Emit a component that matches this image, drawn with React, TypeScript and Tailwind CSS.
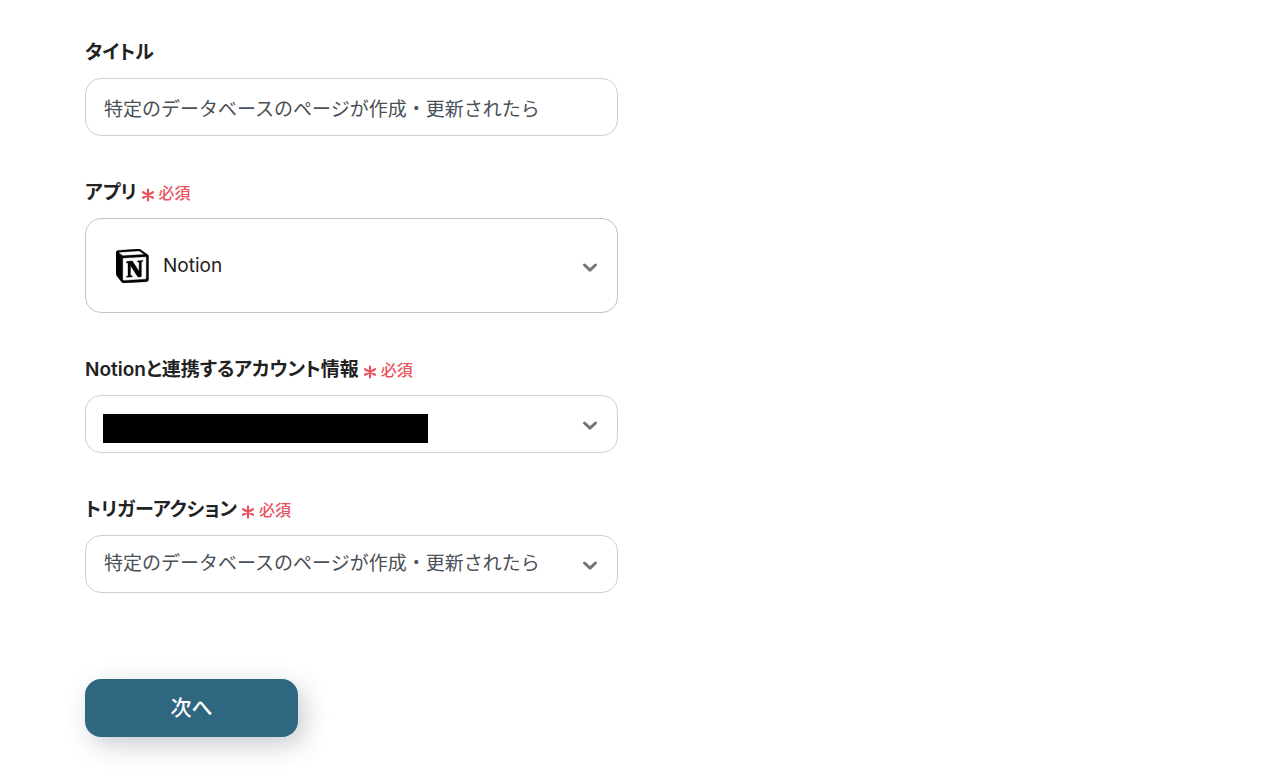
import { useState, type ReactNode } from 'react';
import clsx from 'clsx';

const TRIGGER = '特定のデータベースのページが作成・更新されたら';

function RequiredMark() {
  return (
    <span className="flex items-center gap-1 text-[16px] font-medium text-[#ea535d]">
      <svg className="mt-1 size-[14px]" viewBox="0 0 14 14" aria-hidden="true">
        <path
          d="M7 1.500v11M2 4.200l10 5.600M12 4.200L2 9.800"
          fill="none"
          stroke="currentColor"
          strokeWidth="2.200"
          strokeLinecap="round"
        />
      </svg>
      必須
    </span>
  );
}

function NotionLogo() {
  return (
    <svg className="size-[34px]" viewBox="0 0 100 100" aria-hidden="true">
      <path
        fill="#fff"
        d="M6 4.3l55.300-4.100c6.800-.6 8.600-.2 12.800 2.900l17.700 12.400c2.900 2.100 3.900 2.700 3.900 5.100v68.200c0 4.300-1.600 6.800-7 7.200l-64.200 3.900c-4.100.2-6-.4-8.200-3.100L3.300 79.900C1 76.800 0 74.400 0 71.700V11.100C0 7.600 1.600 4.700 6 4.300z"
      />
      <path
        fill="#000"
        stroke="#000"
        strokeWidth="1"
        fillRule="evenodd"
        d="M61.350.227l-55.333 4.087C1.553 4.700 0 7.617 0 11.113v60.660c0 2.723.967 5.053 3.300 8.167l13.007 16.913c2.137 2.723 4.080 3.307 8.160 3.113l64.257-3.890c5.433-.387 6.990-2.917 6.990-7.193V20.640c0-2.210-.873-2.847-3.443-4.733L74.167 3.143C69.893.037 68.147-.357 61.350.227zM25.920 19.523c-5.247.353-6.437.433-9.417-1.990L8.927 11.507c-.770-.780-.383-1.753 1.557-1.947l53.193-3.887c4.467-.390 6.793 1.167 8.540 2.527l9.123 6.610c.390.197 1.360 1.360.193 1.360l-54.933 3.307-.680.047zM19.803 88.300V30.367c0-2.530.777-3.697 3.103-3.893L86 22.780c2.140-.193 3.107 1.167 3.107 3.693v57.547c0 2.530-.390 4.670-3.883 4.863l-60.377 3.500c-3.493.193-5.043-.970-5.043-4.083zm59.600-54.827c.387 1.750 0 3.500-1.750 3.700l-2.910.577v42.773c-2.527 1.360-4.853 2.137-6.797 2.137-3.107 0-3.883-.973-6.210-3.887l-19.030-29.940v28.967l6.020 1.363s0 3.500-4.857 3.500l-13.390.777c-.390-.780 0-2.723 1.357-3.110l3.497-.970v-38.300L30.480 40.667c-.390-1.750.580-4.277 3.300-4.473l14.367-.967 19.800 30.327v-26.830l-5.047-.580c-.390-2.143 1.163-3.700 3.103-3.890l13.400-.780z"
      />
    </svg>
  );
}

function Chevron() {
  return (
    <svg
      className="pointer-events-none absolute top-1/2 right-5 -mt-1.5 h-4 w-4"
      viewBox="0 0 16 16"
      aria-hidden="true"
    >
      <path
        d="M2.500 5L8 10.200L13.500 5"
        fill="none"
        stroke="#757575"
        strokeWidth="3"
        strokeLinecap="round"
        strokeLinejoin="round"
      />
    </svg>
  );
}

type FieldProps = {
  id: string;
  label: string;
  required?: boolean;
  children: ReactNode;
};

function Field({ id, label, required, children }: FieldProps) {
  return (
    <div className="flex flex-col gap-2.5">
      <div className="flex h-[30px] items-center gap-1">
        <label
          htmlFor={id}
          className="text-[19px] leading-7 font-semibold text-[#222] [font-feature-settings:'palt']"
        >
          {label}
        </label>
        {required && <RequiredMark />}
      </div>
      <div className="relative">{children}</div>
    </div>
  );
}

const control = 'w-full appearance-none rounded-2xl border bg-white pr-12 outline-none';

export default function App() {
  const [title, setTitle] = useState(TRIGGER);

  return (
    <main className="min-h-screen bg-white px-[85px] pt-[38px] pb-10 font-['Inter','Noto_Sans_CJK_JP',sans-serif]">
      <form className="flex w-full max-w-[533px] flex-col gap-[42px]" onSubmit={(e) => e.preventDefault()}>
        <Field id="title" label="タイトル">
          <input
            id="title"
            value={title}
            onChange={(e) => setTitle(e.target.value)}
            className={clsx(control, 'h-[58px] border-[#cbd0d6] pl-[18px] text-[19px] text-[#495057]')}
          />
        </Field>

        <Field id="app" label="アプリ" required>
          <select
            id="app"
            className={clsx(control, 'h-[95px] border-[#c4c4c4] pt-0.5 pl-[77px] text-[19px] text-[#222]')}
          >
            <option>Notion</option>
          </select>
          <span className="pointer-events-none absolute inset-y-0 left-[31px] flex items-center">
            <NotionLogo />
          </span>
          <Chevron />
        </Field>

        <Field id="account" label="Notionと連携するアカウント情報" required>
          <select id="account" className={clsx(control, 'h-[58px] border-[#cbd0d6] pl-[18px] text-[19px]')}>
            <option aria-label="アカウント" />
          </select>
          {/* account name is masked */}
          <span className="pointer-events-none absolute top-[19px] left-[18px] h-[29px] w-[325px] bg-black" />
          <Chevron />
        </Field>

        <Field id="trigger" label="トリガーアクション" required>
          <select
            id="trigger"
            className={clsx(control, 'h-[58px] border-[#cbd0d6] pl-[18px] text-[19px] text-[#495057]')}
          >
            <option>{TRIGGER}</option>
          </select>
          <Chevron />
        </Field>

        <button
          type="submit"
          className="mt-11 h-[58px] w-[213px] rounded-2xl bg-[#2f6680] text-[21px] font-medium text-white shadow-[6px_8px_24px_rgba(40,55,70,0.25)]"
        >
          次へ
        </button>
      </form>
    </main>
  );
}
